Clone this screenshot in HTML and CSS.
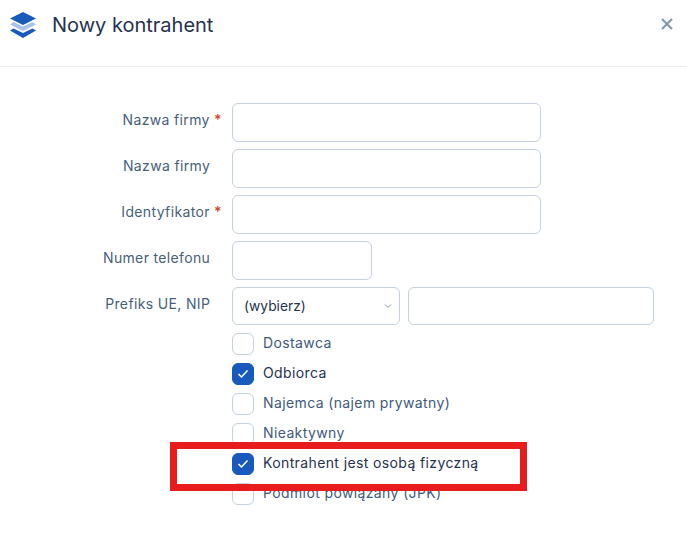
FILE: index.html
```html
<!DOCTYPE html>
<html lang="pl">
<head>
<meta charset="utf-8">
<title>Nowy kontrahent</title>
<link rel="stylesheet" href="styles.css">
</head>
<body>
<div class="modal">
  <header class="head">
    <svg class="logo" width="28" height="26" viewBox="0 0 28 26">
      <path fill="#185abc" d="M14 0 L27 6.500 L14 13 L1 6.500 Z"/>
      <path fill="#a9c3ec" d="M4.500 10 L14 14.500 L23.500 10 L27 12.500 L14 19 L1 12.500 Z"/>
      <path fill="#185abc" d="M4.500 16.500 L14 21 L23.500 16.500 L27 18.500 L14 26 L1 18.500 Z"/>
    </svg>
    <h1 class="title">Nowy kontrahent</h1>
    <svg class="close" width="12" height="12" viewBox="0 0 12 12"><path d="M1 1 L11 11 M11 1 L1 11" stroke="#7f9bb3" stroke-width="2.200" fill="none"/></svg>
  </header>
  <form class="form">
    <div class="row"><label class="lab">Nazwa firmy <span class="req">*</span></label><input class="inp wide" type="text"></div>
    <div class="row"><label class="lab">Nazwa firmy<span class="req hidden"> *</span></label><input class="inp wide" type="text"></div>
    <div class="row"><label class="lab">Identyfikator <span class="req">*</span></label><input class="inp wide" type="text"></div>
    <div class="row"><label class="lab">Numer telefonu<span class="req hidden"> *</span></label><input class="inp phone" type="text"></div>
    <div class="row short"><label class="lab">Prefiks UE, NIP<span class="req hidden"> *</span></label>
      <div class="sel">(wybierz)<svg class="chev" width="8" height="6" viewBox="0 0 8 6"><path d="M1 1.500 L4 4.500 L7 1.500" stroke="#8396a8" stroke-width="1" fill="none"/></svg></div>
      <input class="inp nip" type="text">
    </div>
    <div class="checks">
      <div class="chk"><span class="box"></span><span class="txt">Dostawca</span></div>
      <div class="chk on"><span class="box"><svg width="12" height="10" viewBox="0 0 12 10"><path d="M1.500 5 L4.500 8 L10.500 1.500" stroke="#fff" stroke-width="1.500" fill="none"/></svg></span><span class="txt">Odbiorca</span></div>
      <div class="chk"><span class="box"></span><span class="txt">Najemca (najem prywatny)</span></div>
      <div class="chk"><span class="box"></span><span class="txt">Nieaktywny</span></div>
      <div class="chk on"><span class="box"><svg width="12" height="10" viewBox="0 0 12 10"><path d="M1.500 5 L4.500 8 L10.500 1.500" stroke="#fff" stroke-width="1.500" fill="none"/></svg></span><span class="txt">Kontrahent jest osobą fizyczną</span></div>
      <div class="chk"><span class="box"></span><span class="txt">Podmiot powiązany (JPK)</span></div>
    </div>
  </form>
</div>
<div class="mark"></div>
</body>
</html>
```

FILE: styles.css
```css
* { box-sizing: border-box; }
html, body { margin: 0; padding: 0; }
body {
  width: 687px;
  height: 534px;
  overflow: hidden;
  background: #fff;
  font-family: Inter, "Liberation Sans", sans-serif;
  font-size: 14px;
  color: #475f7b;
  position: relative;
}
.head {
  height: 67px;
  border-bottom: 1px solid #eceaf3;
  display: flex;
  align-items: flex-start;
  padding: 12px 14px 0 9px;
}
.logo { flex: none; }
.title {
  margin: 0 0 0 15px;
  font-size: 20px;
  font-weight: 400;
  line-height: 26px;
  color: #26324f;
  flex: 1;
}
.close { margin-top: 6px; flex: none; }
.form {
  padding: 36px 0 0 0;
  display: flex;
  flex-direction: column;
}
.row {
  display: flex;
  align-items: flex-start;
  height: 39px;
  margin-bottom: 7px;
}
.row.short { height: 38px; margin-bottom: 8px; }
.lab {
  width: 232px;
  padding-right: 10px;
  text-align: right;
  line-height: 18px;
  padding-top: 8px;
  color: #475f7b;
  letter-spacing: 0.35px;
  flex: none;
}
.req { color: #d9442f; font-weight: 600; }
.hidden { visibility: hidden; }
.inp, .sel {
  display: block;
  height: 100%;
  background: #fff;
  border: 1px solid #c5d1de;
  border-radius: 6px;
  outline: none;
  padding: 0 11px;
  font: inherit;
}
.wide { width: 309px; }
.phone { width: 140px; }
.sel {
  width: 168px;
  flex: none;
  display: flex;
  align-items: center;
  justify-content: space-between;
  color: #26324f;
  font-weight: 400;
  font-size: 13.800px;
  padding-right: 7px;
}
.nip { width: 246px; margin-left: 8px; }
.checks { padding-left: 232px; display: flex; flex-direction: column; }
.chk { display: flex; align-items: flex-start; height: 30px; }
.box {
  width: 22px;
  height: 22px;
  border: 1px solid #c5d1de;
  border-radius: 6px;
  background: #fff;
  flex: none;
  display: flex;
  align-items: center;
  justify-content: center;
}
.on .box { background: #185abc; border-color: #185abc; }
.txt { margin: -1px 0 0 9px; line-height: 22px; font-weight: 400; letter-spacing: 0.38px; color: #3f5a7c; }
.on .txt { color: #26324f; }
.mark {
  position: absolute;
  left: 170px;
  top: 442px;
  width: 357px;
  height: 49px;
  border: 7px solid #e81c1c;
}
```
